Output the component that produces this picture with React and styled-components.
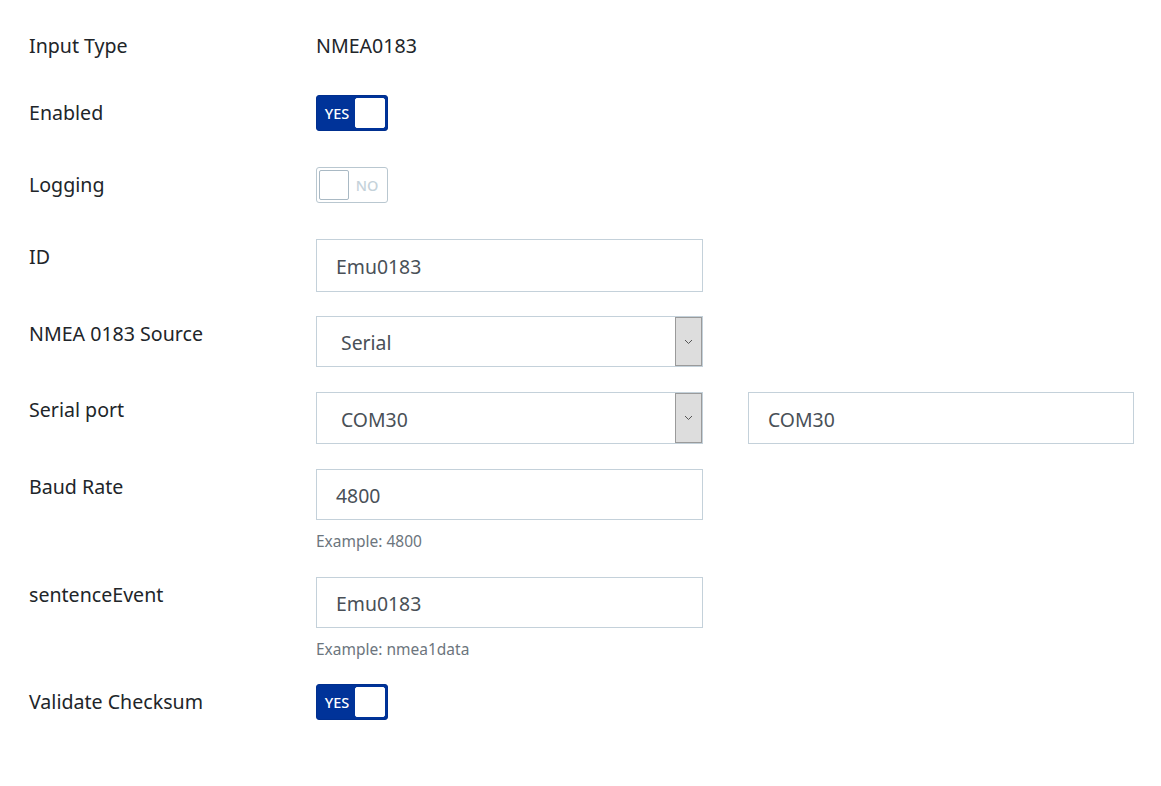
import React from "react";
import styled, { createGlobalStyle } from "styled-components";

const GlobalStyle = createGlobalStyle`
  body {
    margin: 0;
    background: #ffffff;
    font-family: "Noto Sans", "Open Sans", sans-serif;
    color: #212529;
  }
`;

const Form = styled.div`
  display: flex;
  flex-direction: column;
  padding: 28px 0 0 29px;
`;

const Row = styled.div`
  display: grid;
  grid-template-columns: 287px 387px 45px 386px;
  align-items: start;
  margin-top: ${(props) => props.$space || 0}px;
`;

const Label = styled.div`
  font-size: 19.6px;
  line-height: 36px;
  color: #212529;
`;

const Value = styled.div`
  font-size: 19.6px;
  line-height: 36px;
  color: #212529;
`;

const Field = styled.div`
  display: flex;
  flex-direction: column;
`;

const TextInput = styled.div`
  box-sizing: border-box;
  height: ${(props) => props.$height || 53}px;
  border: 1px solid #c4d1da;
  padding: 2px 19px 0;
  display: flex;
  align-items: center;
  font-size: 19.4px;
  color: #495057;
  background: #fff;
`;

const SelectBox = styled.div`
  box-sizing: border-box;
  height: ${(props) => props.$height || 52}px;
  border: 1px solid #c4d1da;
  display: flex;
  align-items: stretch;
  background: #fff;
`;

const SelectText = styled.div`
  flex: 1;
  display: flex;
  align-items: center;
  padding: 2px 0 0 24px;
  font-size: 19.4px;
  color: #495057;
`;

const SelectButton = styled.div`
  width: 25px;
  background: #dddddd;
  border: 1px solid #9a9a9a;
  display: flex;
  align-items: center;
  justify-content: center;
`;

const Help = styled.div`
  font-size: 15.5px;
  line-height: 22px;
  margin-top: 10px;
  color: #6c757d;
`;

const Toggle = styled.div`
  box-sizing: border-box;
  width: 72px;
  height: 36px;
  border-radius: 3px;
  border: 1px solid ${(props) => (props.$on ? "#002f8f" : "#b9c7d0")};
  background: ${(props) => (props.$on ? "#003399" : "#ffffff")};
  display: flex;
  flex-direction: ${(props) => (props.$on ? "row" : "row-reverse")};
  align-items: center;
  padding: 2px;
`;

const ToggleText = styled.span`
  flex: 1;
  text-align: center;
  font-size: 14.5px;
  font-weight: 500;
  color: ${(props) => (props.$on ? "#ffffff" : "#c5d2da")};
`;

const Knob = styled.span`
  box-sizing: border-box;
  width: 30px;
  height: 30px;
  background: #ffffff;
  border-radius: 2px;
  border: 1px solid ${(props) => (props.$on ? "#ffffff" : "#a9b9c4")};
`;

const Chevron = () => (
  <svg width="9" height="6" viewBox="0 0 9 6">
    <path d="M1 1 L4.5 4.5 L8 1" fill="none" stroke="#555" strokeWidth="1" />
  </svg>
);

const Switch = ({ on }) => (
  <Toggle $on={on}>
    <ToggleText $on={on}>{on ? "YES" : "NO"}</ToggleText>
    <Knob $on={on} />
  </Toggle>
);

const Select = ({ value, height }) => (
  <SelectBox $height={height}>
    <SelectText>{value}</SelectText>
    <SelectButton>
      <Chevron />
    </SelectButton>
  </SelectBox>
);

const App = () => (
  <>
    <GlobalStyle />
    <Form>
      <Row>
        <Label>Input Type</Label>
        <Value>NMEA0183</Value>
      </Row>
      <Row $space={31}>
        <Label>Enabled</Label>
        <Switch on />
      </Row>
      <Row $space={36}>
        <Label>Logging</Label>
        <Switch on={false} />
      </Row>
      <Row $space={36}>
        <Label>ID</Label>
        <TextInput>Emu0183</TextInput>
      </Row>
      <Row $space={24}>
        <Label>NMEA 0183 Source</Label>
        <Select value="Serial" height={51} />
      </Row>
      <Row $space={25}>
        <Label>Serial port</Label>
        <Select value="COM30" height={52} />
        <span />
        <TextInput $height={52}>COM30</TextInput>
      </Row>
      <Row $space={25}>
        <Label>Baud Rate</Label>
        <Field>
          <TextInput $height={51}>4800</TextInput>
          <Help>Example: 4800</Help>
        </Field>
      </Row>
      <Row $space={25}>
        <Label>sentenceEvent</Label>
        <Field>
          <TextInput $height={51}>Emu0183</TextInput>
          <Help>Example: nmea1data</Help>
        </Field>
      </Row>
      <Row $space={24}>
        <Label>Validate Checksum</Label>
        <Switch on />
      </Row>
    </Form>
  </>
);

export default App;
